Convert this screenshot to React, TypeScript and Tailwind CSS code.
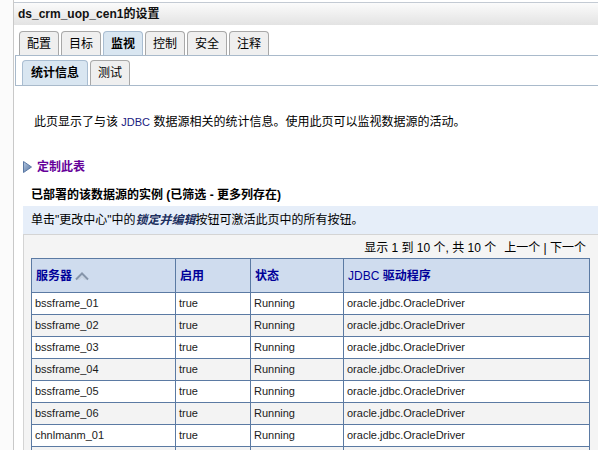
import React from 'react';

const font = { fontFamily: '"Liberation Sans", "Noto Sans CJK SC", sans-serif' };

const mainTabs = ['配置', '目标', '监视', '控制', '安全', '注释'];

const rows = [
  'bssframe_01',
  'bssframe_02',
  'bssframe_03',
  'bssframe_04',
  'bssframe_05',
  'bssframe_06',
  'chnlmanm_01',
];

const SortIcon = () => (
  <svg width="14" height="9" viewBox="0 0 14 9" className="inline-block ml-[3px] align-[-1px]">
    <path d="M1 7.5 L7 1.5 L13 7.5" fill="none" stroke="#8695aa" strokeWidth="2" />
    <path d="M3.5 8 L7 4.5 L10.5 8" fill="none" stroke="#c3ccd8" strokeWidth="1" />
  </svg>
);

const Triangle = () => (
  <svg width="9" height="12" viewBox="0 0 9 12">
    <defs>
      <linearGradient id="tri" x1="0" y1="0" x2="1" y2="1">
        <stop offset="0" stopColor="#b8cbe4" />
        <stop offset="1" stopColor="#4f6f9c" />
      </linearGradient>
    </defs>
    <path d="M0.5 0.5 L8.5 6 L0.5 11.5 Z" fill="url(#tri)" stroke="#5a78a4" strokeWidth="1" />
  </svg>
);

export default function App() {
  return (
    <div className="flex w-[598px] h-[450px] overflow-hidden bg-white text-black" style={font}>
      {/* left strip */}
      <div className="w-[13px] shrink-0 bg-[#fbfbfb]" />
      <div className="w-px shrink-0 bg-[#c9c9c9]" />

      <div className="flex-1 min-w-0">
        {/* title bar */}
        <div className="mt-[2px] h-[23px] border-t border-[#c3cad3] bg-gradient-to-b from-[#fbfbfb] to-[#e3e3e3] pl-[4px] flex items-center">
          <span className="text-[12px] font-bold leading-[16px] text-[#111]">ds_crm_uop_cen1的设置</span>
        </div>

        {/* main tabs */}
        <div className="mt-[6px] flex gap-[2px] pl-[5px]">
          {mainTabs.map((t) => {
            const active = t === '监视';
            return (
              <div
                key={t}
                className={`w-[40px] h-[24px] border border-b-0 rounded-t-[4px] flex items-center justify-center text-[12px] leading-[16px] ${
                  active ? 'bg-[#d9e6f1] border-[#a9bdd1] font-bold' : 'bg-[#efefef] border-[#a8a8a8]'
                }`}
              >
                {t}
              </div>
            );
          })}
        </div>

        {/* sub tabs */}
        <div className="ml-px h-[31px] border-t border-l border-b border-[#a9bacb] pl-[6px] pt-[4px] flex gap-[2px]">
          <div className="w-[66px] h-[25px] border border-b-0 border-[#a9bdd1] rounded-t-[4px] bg-[#d9e6f1] flex items-center justify-center text-[12px] leading-[16px] font-bold">
            统计信息
          </div>
          <div className="w-[40px] h-[25px] border border-b-0 border-[#a8a8a8] rounded-t-[4px] bg-[#efefef] flex items-center justify-center text-[12px] leading-[16px]">
            测试
          </div>
        </div>

        {/* description */}
        <div className="mt-[28px] ml-[20px] text-[12px] leading-[16px] whitespace-nowrap">
          此页显示了与该 <span className="text-[11px] text-[#1a1a80]">JDBC</span> 数据源相关的统计信息。使用此页可以监视数据源的活动。
        </div>

        {/* customize */}
        <div className="mt-[29px] ml-[9px] flex items-center gap-[5px]">
          <Triangle />
          <span className="text-[12px] leading-[16px] font-bold text-[#660099]">定制此表</span>
        </div>

        {/* section heading */}
        <div className="mt-[12px] ml-[17px] text-[12px] leading-[16px] font-bold whitespace-nowrap">
          已部署的该数据源的实例 (已筛选 - 更多列存在)
        </div>

        {/* info bar */}
        <div className="mt-[3px] ml-[9px] h-[28px] bg-[#e6eef9] pl-[8px] flex items-center text-[12px] leading-[16px] whitespace-nowrap">
          单击"更改中心"中的<span className="font-bold italic text-[#1c2f5e]">锁定并编辑</span>按钮可激活此页中的所有按钮。
        </div>

        {/* table panel */}
        <div className="ml-[9px] h-[240px] border-t border-l border-[#d4d4d4] bg-[#f4f4f4] pl-[7px] pr-[10px]">
          <div className="pt-[5px] pr-[2px] flex justify-end text-[12px] leading-[16px] whitespace-nowrap">
            <span>显示 1 到 10 个, 共 10 个</span>
            <span className="ml-[8px]">上一个 | 下一个</span>
          </div>
          <table className="mt-[2px] w-[558px] table-fixed border-collapse text-[11px]">
            <colgroup>
              <col className="w-[144px]" />
              <col className="w-[75px]" />
              <col className="w-[93px]" />
              <col className="w-[246px]" />
            </colgroup>
            <thead>
              <tr className="h-[34px] bg-[#cfdcee] text-[12px] font-bold text-[#000099]">
                <th className="border border-[#5b7aa3] px-[4px] text-left align-middle">
                  服务器
                  <SortIcon />
                </th>
                <th className="border border-[#5b7aa3] px-[4px] text-left">启用</th>
                <th className="border border-[#5b7aa3] px-[4px] text-left">状态</th>
                <th className="border border-[#5b7aa3] px-[4px] text-left">
                  <span className="font-normal">JDBC</span> 驱动程序
                </th>
              </tr>
            </thead>
            <tbody>
              {rows.map((r, i) => (
                <tr key={r} className={`h-[22px] ${i % 2 === 1 ? 'bg-[#f3f3f3]' : 'bg-white'} text-[#1a1a1a]`}>
                  <td className="border border-[#5b7aa3] px-[3px]">{r}</td>
                  <td className="border border-[#5b7aa3] px-[3px]">true</td>
                  <td className="border border-[#5b7aa3] px-[3px]">Running</td>
                  <td className="border border-[#5b7aa3] px-[3px]">oracle.jdbc.OracleDriver</td>
                </tr>
              ))}
              <tr className="h-[22px] bg-[#f3f3f3]">
                <td className="border border-[#5b7aa3]" />
                <td className="border border-[#5b7aa3]" />
                <td className="border border-[#5b7aa3]" />
                <td className="border border-[#5b7aa3]" />
              </tr>
            </tbody>
          </table>
        </div>
      </div>
    </div>
  );
}
